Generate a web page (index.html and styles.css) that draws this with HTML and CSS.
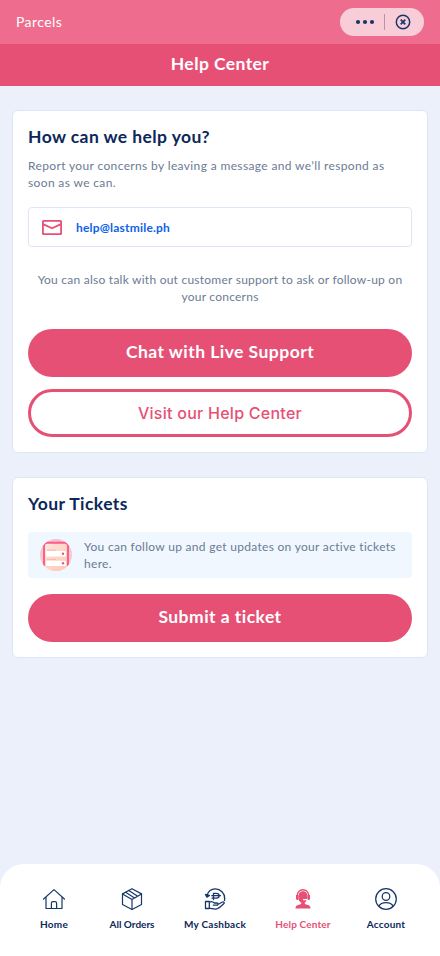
FILE: index.html
```html
<!DOCTYPE html>
<html lang="en">
<head>
<meta charset="utf-8">
<meta name="viewport" content="width=device-width, initial-scale=1">
<title>Help Center</title>
<link rel="stylesheet" href="styles.css">
</head>
<body>
<div class="app">
  <header class="topbar">
    <span class="topbar-name">Parcels</span>
    <div class="capsule">
      <svg width="20" height="6" viewBox="0 0 20 6" fill="#17376b"><circle cx="3" cy="3" r="2.1"/><circle cx="10" cy="3" r="2.1"/><circle cx="17" cy="3" r="2.1"/></svg>
      <span class="capsule-line"></span>
      <svg width="16" height="16" viewBox="0 0 16 16" fill="none" stroke="#17376b"><circle cx="8" cy="8" r="6.7" stroke-width="1.5"/><path d="M5.7 5.7l4.6 4.6M10.3 5.7l-4.6 4.6" stroke-width="1.7"/></svg>
    </div>
  </header>
  <div class="titlebar"><h1>Help Center</h1></div>
  <main class="content">
    <section class="card">
      <h2>How can we help you?</h2>
      <p class="intro">Report your concerns by leaving a message and we’ll respond as<br>soon as we can.</p>
      <a class="mail">
        <svg width="20" height="15" viewBox="0 0 20 15" fill="none" stroke="#e65075" stroke-width="1.8" stroke-linejoin="round"><rect x=".9" y=".9" width="18.2" height="13.2" rx=".6"/><path d="M1 4.1l9 4.2 9-4.2"/></svg>
        <span>help@lastmile.ph</span>
      </a>
      <p class="also">You can also talk with out customer support to ask or follow-up on<br>your concerns</p>
      <button class="btn chat">Chat with Live Support</button>
      <button class="btn outline">Visit our Help Center</button>
    </section>
    <section class="card tickets">
      <h2>Your Tickets</h2>
      <div class="notice">
        <svg width="32" height="32" viewBox="0 0 32 32">
          <defs>
            <linearGradient id="sheet" x1="0" y1="0" x2="1" y2="1"><stop offset="0" stop-color="#ffe8df"/><stop offset="1" stop-color="#ffc4b2"/></linearGradient>
            <linearGradient id="disc" x1="0" y1="0" x2="0" y2="1"><stop offset="0" stop-color="#f3bfd2"/><stop offset=".55" stop-color="#f5cbd6"/><stop offset="1" stop-color="#ffc9b8"/></linearGradient>
            <clipPath id="round"><circle cx="16" cy="16" r="16"/></clipPath>
          </defs>
          <g clip-path="url(#round)">
            <rect width="32" height="32" fill="url(#disc)"/>
            <path d="M4 32V7a3.200 3.200 0 013-3.200h18a3.200 3.200 0 013 3.200v25z" fill="url(#sheet)"/>
            <path d="M4 27V7a3.200 3.200 0 013.200-3.200h17.600A3.200 3.200 0 0128 7v20" fill="none" stroke="#fa5c85" stroke-width="1.9"/>
            <path d="M7 11.200h9M7 20.400h9" stroke="#f5b3ad" stroke-width=".9"/>
            <rect x="6" y="12" width="20" height="5.500" rx="1" fill="#fff"/><rect x="6" y="21.800" width="20" height="5.200" rx="1" fill="#fff"/>
            <circle cx="23" cy="14.800" r="1.200" fill="#ee537b"/><circle cx="23" cy="24.300" r="1.200" fill="#ee537b"/>
          </g>
        </svg>
        <p>You can follow up and get updates on your active tickets<br>here.</p>
      </div>
      <button class="btn submit">Submit a ticket</button>
    </section>
  </main>
  <nav class="tabs">
    <a class="tab">
      <svg width="24" height="24" viewBox="0 0 24 24" fill="none" stroke="#17376b" stroke-width="1.2" stroke-linejoin="round" stroke-linecap="round"><path d="M1.600 12L12 2.600 22.400 12M4 10.200v11.300h16V10.200"/><path d="M9.400 21.300v-5.100c0-1 .6-1.600 1.600-1.600h2c1 0 1.600.6 1.600 1.600v5.100"/></svg>
      <span>Home</span>
    </a>
    <a class="tab orders">
      <svg width="24" height="24" viewBox="0 0 24 24" fill="none" stroke="#17376b" stroke-width="1.2" stroke-linejoin="round" stroke-linecap="round"><path d="M12 1.700l9.500 5.200v10.600L12 22.500l-9.500-5V6.900z"/><path d="M2.500 6.900L12 12.600l9.500-5.700M12 12.600v9.900M8.800 3.500l8.500 5.500M5.700 5.300l8.800 5.600"/></svg>
      <span>All Orders</span>
    </a>
    <a class="tab">
      <svg width="24" height="24" viewBox="0 0 24 24" fill="none" stroke="#17376b" stroke-width="1.3" stroke-linejoin="round" stroke-linecap="round"><path d="M3.800 8.600C5.200 4.500 8.300 1.900 12.200 1.900c5.500 0 9.500 4.400 9.500 9.600 0 .8-.1 1.300-.2 1.800"/><path d="M2.500 7.500l1.400 2.600L6.400 8.500z" fill="#17376b"/><path d="M10.500 12.600V6.300h2.700c4 0 4 4.800 0 4.800h-4.200M8.800 8.700h8.600" stroke-width="1.300"/><path d="M2.500 14.500h3.800v7H2.500zM6.300 15.200c2-1 3.700-.5 5 .8h2.500c1.700 0 1.700 2.100.1 2.100h-3.600M15.200 17.300l4.300-2.300c1.500-.6 2.300.8 1.200 1.700-2.400 2.400-4.600 4.500-7.300 5.300-2.300.5-4.900-.7-7.100-.8"/></svg>
      <span>My Cashback</span>
    </a>
    <a class="tab active">
      <svg width="24" height="24" viewBox="0 0 24 24" fill="#e65075"><path d="M5.500 11.500C4.900 5.900 7.600 1.900 12 1.900s7.100 4 6.500 9.600h-1.300c.4-5.200-1.600-8.100-5.200-8.100s-5.600 2.900-5.200 8.100z"/><path d="M7.300 10.200c0-3.800 1.700-6 4.700-6s4.700 2.200 4.700 6l-.4 1.800h-4.200v1.200h3.600c-.8 1.500-1.600 2.300-2 2.600l.2 1.300 3.700 1.200c1.300.5 1.900 1.500 1.900 3.100h-15c0-1.600.6-2.600 1.900-3.100l3.700-1.200.2-1.300c-2-1.200-3-3.200-3-5.600z"/><path d="M5 8h2.300v5H6.500C5.500 13 5 12.400 5 11.500zM16.700 8H19v3.500c0 .9-.5 1.500-1.500 1.500h-.8z"/></svg>
      <span>Help Center</span>
    </a>
    <a class="tab">
      <svg width="24" height="24" viewBox="0 0 24 24" fill="none" stroke="#17376b" stroke-width="1.25"><circle cx="12" cy="12" r="10.300"/><circle cx="12" cy="9.500" r="3.800"/><path d="M4.800 19.200c1.300-2.600 4-3.700 7.200-3.700s5.900 1.100 7.200 3.700"/></svg>
      <span>Account</span>
    </a>
  </nav>
</div>
</body>
</html>
```
FILE: styles.css
```css
* { box-sizing: border-box; }
body { margin: 0; font-family: Lato, sans-serif; background: #ebf0fa; color: #0b285a; }
h1, h2, p { margin: 0; }
.app { display: flex; flex-direction: column; height: 956px; }
.topbar { height: 44px; flex: none; padding: 0 16px; display: flex; align-items: center; justify-content: space-between; background: #ee6d8f; }
.topbar-name { padding-bottom: 1px; font-size: 14px; letter-spacing: .42px; color: #fff; }
.capsule { display: flex; align-items: center; width: 84px; height: 28px; padding: 0 13px 0 15px; border-radius: 14px; background: #f9cdd8; }
.capsule-line { width: 1px; height: 16px; margin: 0 10px 0 9px; background: #b394ab; }
.titlebar { height: 42px; flex: none; display: flex; align-items: center; justify-content: center; padding-bottom: 2px; background: #e65075; color: #fff; }
h1, h2 { font-size: 17.5px; line-height: 24px; font-weight: 700; letter-spacing: .42px; }
.content { flex: 1; padding: 24px 12px 0; display: flex; flex-direction: column; gap: 24px; min-height: 0; }
.card { height: 343px; padding: 14px 15px; border: 1px solid #dde7f3; border-radius: 6px; background: #fff; flex: none; }
.card p { font-size: 12px; line-height: 17px; color: #6b7b95; white-space: nowrap; letter-spacing: .3px; }
.card .intro { margin-top: 8px; letter-spacing: .36px; }
.mail { display: flex; align-items: center; gap: 14px; height: 40px; margin-top: 16px; padding-left: 13px; border: 1px solid #dde7f3; border-radius: 4px; color: #0d62e6; font-size: 12px; font-weight: 700; letter-spacing: .2px; }
.card .also { margin-top: 24px; text-align: center; letter-spacing: .24px; }
.btn { display: flex; align-items: center; justify-content: center; width: 100%; height: 48px; padding: 0 0 3px; border: 0; border-radius: 24px; background: #e65075; color: #fff; font-family: inherit; font-size: 17.5px; font-weight: 700; letter-spacing: .46px; }
.chat { margin-top: 24px; }
.outline { margin-top: 12px; padding: 0; border: 3px solid #e65075; background: #fff; color: #e65075; font-family: Inter, sans-serif; font-size: 16px; font-weight: 500; letter-spacing: .26px; }
.tickets { height: 181px; }
.notice { display: flex; align-items: center; gap: 12px; height: 46px; margin-top: 16px; padding-left: 12px; border-radius: 4px; background: #f0f7ff; }
.submit { margin-top: 16px; }
.tabs { flex: none; height: 92px; padding: 23px 14px 0; display: grid; grid-template-columns: 80px 76px 90px 86px 80px; align-items: start; border-radius: 24px 24px 0 0; background: #fff; }
.tab { display: flex; flex-direction: column; align-items: center; gap: 7px; font-size: 10px; line-height: 12px; font-weight: 700; letter-spacing: .25px; white-space: nowrap; }
.orders { letter-spacing: 0; }
.active { color: #e65075; letter-spacing: .15px; }
```
